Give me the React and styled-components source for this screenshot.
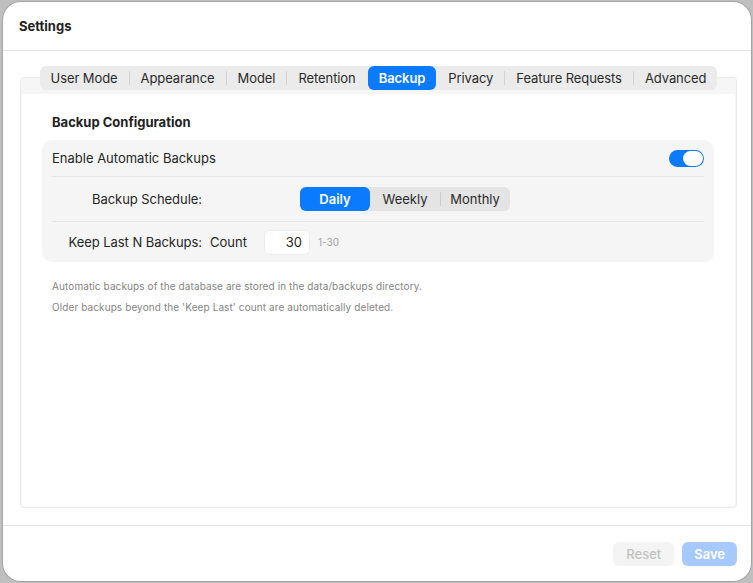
import React from 'react';
import styled, { createGlobalStyle } from 'styled-components';

const GlobalStyle = createGlobalStyle`
  html, body {
    margin: 0;
    padding: 0;
    background: #bfbfbf;
  }
  body {
    font-family: Inter, "Noto Sans", sans-serif;
    color: #262626;
    -webkit-font-smoothing: antialiased;
  }
`;

const Backdrop = styled.div`
  height: 583px;
  box-sizing: border-box;
  padding: 2px 2px 2px 3px;
`;

const Dialog = styled.div`
  height: 100%;
  background: #fff;
  border-radius: 18px;
  display: flex;
  flex-direction: column;
  overflow: hidden;
  box-shadow: 0 0 0 1px rgba(0, 0, 0, 0.14);
`;

const Header = styled.div`
  height: 48px;
  flex: none;
  display: flex;
  align-items: center;
  padding-left: 16px;
  border-bottom: 1px solid #e6e6e6;
  font-size: 13px;
  font-weight: 700;
  color: #222;
`;

const Body = styled.div`
  flex: 1;
  display: flex;
  flex-direction: column;
  padding: 15px 14px 17px 17px;
`;

const TabBar = styled.div`
  align-self: center;
  display: flex;
  align-items: center;
  height: 24px;
  background: #ebebeb;
  border-radius: 6px;
  margin-bottom: -13px;
  position: relative;
  z-index: 1;
`;

const Tab = styled.div`
  height: 24px;
  display: flex;
  align-items: center;
  padding: 0 11px;
  border-radius: 6px;
  font-size: 13px;
  letter-spacing: -0.08px;
  font-weight: ${p => (p.$active ? 600 : 400)};
  color: ${p => (p.$active ? '#fff' : '#2a2a2a')};
  background: ${p => (p.$active ? '#0a7aff' : 'transparent')};
  white-space: nowrap;
`;

const TabSep = styled.div`
  width: 1px;
  height: 14px;
  background: ${p => (p.$hidden ? 'transparent' : '#d4d4d4')};
`;

const Box = styled.div`
  flex: 1;
  display: flex;
  flex-direction: column;
  border: 1px solid #ebebeb;
  border-radius: 4px;
  background: #f6f6f6;
  padding: 16px 1px 1px;
`;

const Inner = styled.div`
  flex: 1;
  background: #fff;
  padding: 20px 21px 0 20px;
`;

const SectionTitle = styled.div`
  font-size: 13px;
  font-weight: 700;
  line-height: 16px;
  color: #222;
  padding-left: 10px;
  margin-bottom: 10px;
`;

const Card = styled.div`
  background: #f5f5f5;
  border-radius: 10px;
  padding: 0 10px;
`;

const Row = styled.div`
  display: flex;
  align-items: center;
  height: ${p => p.$h}px;
  font-size: 13px;
  & + & {
    border-top: 1px solid #e6e6e6;
  }
`;

const Label = styled.div`
  width: 150px;
  flex: none;
  text-align: right;
  white-space: nowrap;
  letter-spacing: -0.05px;
`;

const Toggle = styled.div`
  margin-left: auto;
  width: 35px;
  height: 17px;
  border-radius: 9px;
  background: #0a7aff;
  display: flex;
  align-items: center;
  justify-content: flex-end;
  padding: 0 1px;
  box-sizing: border-box;
`;

const Knob = styled.div`
  width: 20px;
  height: 15px;
  border-radius: 8px;
  background: #fff;
`;

const Segmented = styled.div`
  display: flex;
  align-items: center;
  height: 24px;
  margin-left: 98px;
  background: #e4e4e4;
  border-radius: 6px;
`;

const Segment = styled.div`
  width: 70px;
  height: 24px;
  display: flex;
  align-items: center;
  justify-content: center;
  border-radius: 6px;
  font-weight: ${p => (p.$active ? 600 : 400)};
  color: ${p => (p.$active ? '#fff' : '#2a2a2a')};
  background: ${p => (p.$active ? '#0a7aff' : 'transparent')};
`;

const SegSep = styled.div`
  width: 1px;
  height: 14px;
  margin: 0 -0.5px;
  background: ${p => (p.$hidden ? 'transparent' : '#cdcdcd')};
`;

const SubLabel = styled.div`
  margin-left: 8px;
`;

const NumberInput = styled.div`
  margin-left: 17px;
  width: 46px;
  height: 25px;
  box-sizing: border-box;
  border: 1px solid #ececec;
  border-radius: 6px;
  background: #fff;
  display: flex;
  align-items: center;
  justify-content: flex-end;
  padding-right: 7px;
  font-size: 13px;
`;

const Hint = styled.div`
  margin-left: 8px;
  font-size: 10px;
  color: #a3a3a3;
`;

const Notes = styled.div`
  margin-top: 14px;
  padding-left: 10px;
  font-size: 10px;
  line-height: 21px;
  letter-spacing: 0.1px;
  color: #858585;
`;

const Footer = styled.div`
  height: 55px;
  flex: none;
  border-top: 1px solid #e6e6e6;
  display: flex;
  align-items: center;
  justify-content: flex-end;
  gap: 8px;
  padding-right: 14px;
`;

const Button = styled.div`
  height: 24px;
  padding: 0 ${p => p.$px}px;
  border-radius: 6px;
  display: flex;
  align-items: center;
  font-size: 13px;
  font-weight: ${p => (p.$primary ? 600 : 500)};
  color: ${p => (p.$primary ? '#fff' : '#c2c2c2')};
  background: ${p => (p.$primary ? '#a6c9ff' : '#f4f4f4')};
`;

const tabs = ['User Mode', 'Appearance', 'Model', 'Retention', 'Backup', 'Privacy', 'Feature Requests', 'Advanced'];
const ACTIVE = 'Backup';

export default function App() {
  const activeIdx = tabs.indexOf(ACTIVE);
  return (
    <>
      <GlobalStyle />
      <Backdrop>
        <Dialog>
          <Header>Settings</Header>
          <Body>
            <TabBar>
              {tabs.map((t, i) => (
                <React.Fragment key={t}>
                  {i > 0 && <TabSep $hidden={i === activeIdx || i - 1 === activeIdx} />}
                  <Tab $active={t === ACTIVE}>{t}</Tab>
                </React.Fragment>
              ))}
            </TabBar>
            <Box>
              <Inner>
                <SectionTitle>Backup Configuration</SectionTitle>
                <Card>
                  <Row $h={36}>
                    Enable Automatic Backups
                    <Toggle><Knob /></Toggle>
                  </Row>
                  <Row $h={44}>
                    <Label>Backup Schedule:</Label>
                    <Segmented>
                      <Segment $active>Daily</Segment>
                      <SegSep $hidden />
                      <Segment>Weekly</Segment>
                      <SegSep />
                      <Segment>Monthly</Segment>
                    </Segmented>
                  </Row>
                  <Row $h={40}>
                    <Label>Keep Last N Backups:</Label>
                    <SubLabel>Count</SubLabel>
                    <NumberInput>30</NumberInput>
                    <Hint>1-30</Hint>
                  </Row>
                </Card>
                <Notes>
                  <div>Automatic backups of the database are stored in the data/backups directory.</div>
                  <div>Older backups beyond the 'Keep Last' count are automatically deleted.</div>
                </Notes>
              </Inner>
            </Box>
          </Body>
          <Footer>
            <Button $px={13}>Reset</Button>
            <Button $primary $px={12}>Save</Button>
          </Footer>
        </Dialog>
      </Backdrop>
    </>
  );
}
